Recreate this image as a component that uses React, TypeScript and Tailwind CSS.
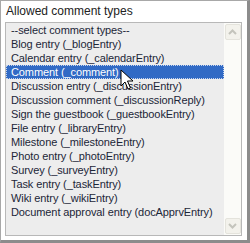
import React from 'react';

const types = [
  '--select comment types--',
  'Blog entry (_blogEntry)',
  'Calendar entry (_calendarEntry)',
  'Comment (_comment)',
  'Discussion entry (_discussionEntry)',
  'Discussion comment (_discussionReply)',
  'Sign the guestbook (_guestbookEntry)',
  'File entry (_libraryEntry)',
  'Milestone (_milestoneEntry)',
  'Photo entry (_photoEntry)',
  'Survey (_surveyEntry)',
  'Task entry (_taskEntry)',
  'Wiki entry (_wikiEntry)',
  'Document approval entry (docApprvEntry)',
];

function Chevron({ up }: { up?: boolean }) {
  return (
    <svg width="9" height="6" viewBox="0 0 9 6">
      <path
        d={up ? 'M1 5 L4.5 1.5 L8 5' : 'M1 1 L4.5 4.5 L8 1'}
        fill="none"
        stroke="#c4c4bc"
        strokeWidth="2"
      />
    </svg>
  );
}

function ScrollButton({ up }: { up?: boolean }) {
  return (
    <div className="w-[16px] h-[16px] rounded-[2px] border border-[#e4e3dc] bg-[#f3f2ec] flex items-center justify-center">
      <Chevron up={up} />
    </div>
  );
}

export default function App() {
  const selected = 3;

  return (
    <div
      className="relative w-[250px] h-[243px] bg-white border-t border-l border-[#a8a8a8] border-r-[3px] border-b-[3px] border-r-[#8c8c8c] border-b-[#8c8c8c] text-[#1c2638]"
      style={{ fontFamily: '"Liberation Sans", Arial, sans-serif' }}
    >
      <div className="pl-[5px] pt-[3px] h-[21px] text-[12px] leading-[14px] text-[#222]">Allowed comment types</div>
      <div className="ml-[4px] w-[237px] h-[214px] border border-[#b8b8b8] bg-[#ededed] flex">
        <ul className="flex-1 text-[11px] leading-[14px] tracking-[-0.1px]">
          {types.map((t, i) => (
            <li
              key={t}
              className={
                i === selected
                  ? 'h-[14px] pl-[5px] bg-[#316ac5] text-white outline-1 outline-dotted outline-[#c8d6ee] -outline-offset-1 whitespace-nowrap'
                  : 'h-[14px] pl-[5px] whitespace-nowrap'
              }
            >
              {t}
            </li>
          ))}
        </ul>
        <div className="w-[17px] bg-[#fbfbf8] flex flex-col justify-between items-center py-[1px]">
          <ScrollButton up />
          <ScrollButton />
        </div>
      </div>
      {/* mouse pointer over the selected row */}
      <svg className="absolute left-[119px] top-[68px]" width="14" height="22" viewBox="0 0 14 22">
        <path d="M1 1 L1 17 L5 13 L8 20 L10.5 19 L7.5 12 L13 12 Z" fill="white" stroke="black" strokeWidth="1" />
      </svg>
    </div>
  );
}
